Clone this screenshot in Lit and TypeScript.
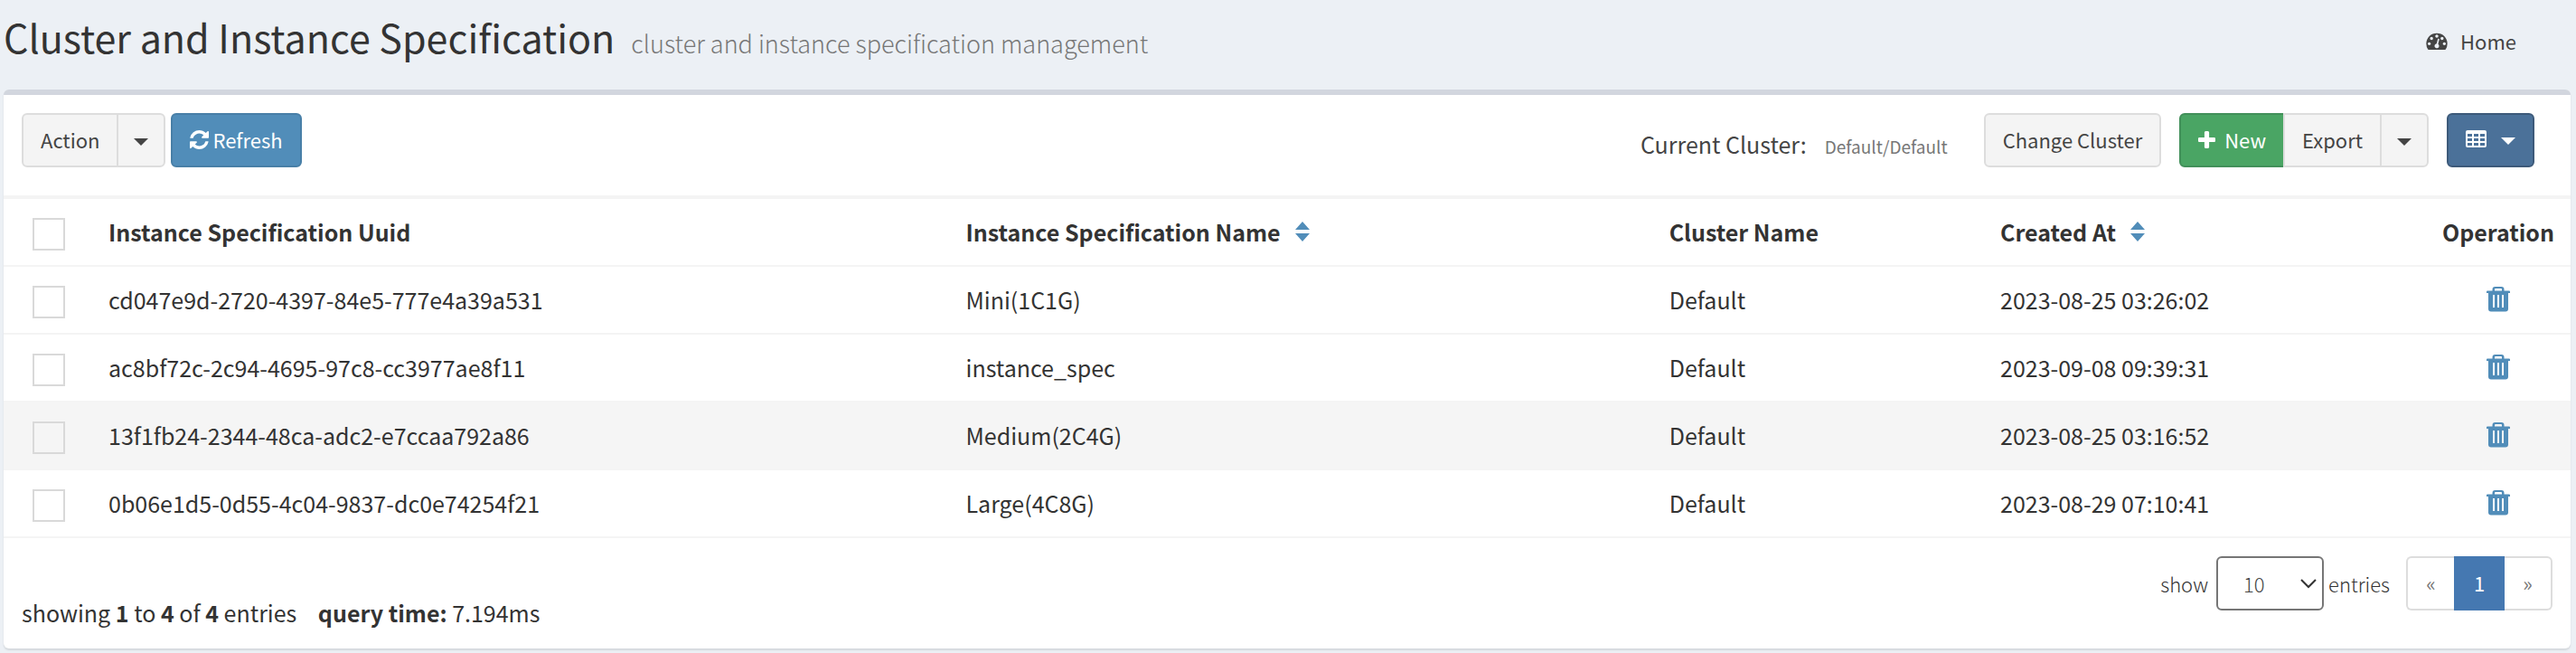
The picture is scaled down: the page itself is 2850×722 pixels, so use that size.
import { LitElement, html, css } from "lit";
import { customElement, state } from "lit/decorators.js";
import { classMap } from "lit/directives/class-map.js";

interface Spec {
  uuid: string;
  name: string;
  cluster: string;
  created: string;
}

const SPECS: Spec[] = [
  { uuid: "cd047e9d-2720-4397-84e5-777e4a39a531", name: "Mini(1C1G)", cluster: "Default", created: "2023-08-25 03:26:02" },
  { uuid: "ac8bf72c-2c94-4695-97c8-cc3977ae8f11", name: "instance_spec", cluster: "Default", created: "2023-09-08 09:39:31" },
  { uuid: "13f1fb24-2344-48ca-adc2-e7ccaa792a86", name: "Medium(2C4G)", cluster: "Default", created: "2023-08-25 03:16:52" },
  { uuid: "0b06e1d5-0d55-4c04-9837-dc0e74254f21", name: "Large(4C8G)", cluster: "Default", created: "2023-08-29 07:10:41" },
];

const dashboardIcon = html`<svg class="ico ico-home" viewBox="0 128 1792 1536" aria-hidden="true"><path d="M384 1152q0-53-37.5-90.5t-90.5-37.5-90.5 37.5-37.5 90.5 37.5 90.5 90.5 37.5 90.5-37.5 37.5-90.5zm192-448q0-53-37.5-90.5t-90.5-37.5-90.5 37.5-37.5 90.5 37.5 90.5 90.5 37.5 90.5-37.5 37.5-90.5zm428 481l101-382q6-26-7.5-48.5t-38.5-29.5-48 6.5-30 39.5l-101 382q-60 5-107 43.5t-63 98.5q-20 77 20 146t117 89 146-20 89-117q16-60-6-117t-72-91zm660-33q0-53-37.5-90.5t-90.5-37.5-90.5 37.5-37.5 90.5 37.5 90.5 90.5 37.5 90.5-37.5 37.5-90.5zm-640-640q0-53-37.5-90.5t-90.5-37.5-90.5 37.5-37.5 90.5 37.5 90.5 90.5 37.5 90.5-37.5 37.5-90.5zm448 192q0-53-37.5-90.5t-90.5-37.5-90.5 37.5-37.5 90.5 37.5 90.5 90.5 37.5 90.5-37.5 37.5-90.5zm320 448q0 261-141 483-19 29-54 29h-1402q-35 0-54-29-141-221-141-483 0-182 71-348t191-286 286-191 348-71 348 71 286 191 191 286 71 348z"/></svg>`;

const refreshIcon = html`<svg class="ico ico-refresh" viewBox="128 128 1536 1536" aria-hidden="true"><path d="M1639 1056q0 5-1 7-64 268-268 434.5t-478 166.5q-146 0-282.5-55t-243.5-157l-129 129q-19 19-45 19t-45-19-19-45v-448q0-26 19-45t45-19h448q26 0 45 19t19 45-19 45l-137 137q71 66 161 102t187 36q134 0 250-65t186-179q11-17 53-117 8-23 30-23h192q13 0 22.5 9.5t9.5 22.5zm25-800v448q0 26-19 45t-45 19h-448q-26 0-45-19t-19-45 19-45l138-138q-148-137-349-137-134 0-250 65t-186 179q-11 17-53 117-8 23-30 23h-199q-13 0-22.5-9.5t-9.5-22.5v-7q65-268 270-434.5t480-166.5q146 0 284 55.5t245 156.5l130-129q19-19 45-19t45 19 19 45z"/></svg>`;

const plusIcon = html`<svg class="ico ico-plus" viewBox="192 128 1408 1408" aria-hidden="true"><path d="M1600 736v192q0 40-28 68t-68 28h-416v416q0 40-28 68t-68 28h-192q-40 0-68-28t-28-68v-416h-416q-40 0-68-28t-28-68v-192q0-40 28-68t68-28h416v-416q0-40 28-68t68-28h192q40 0 68 28t28 68v416h416q40 0 68 28t28 68z"/></svg>`;

const gridCells = [4, 9, 14].map((y) => [2, 9, 16].map((x) => `M${x} ${y}h5v3h-5z`).join("")).join("");

const gridIcon = html`<svg class="ico ico-grid" viewBox="0 0 23 20" aria-hidden="true">
  <path fill-rule="evenodd" d="M2 0h19a2 2 0 0 1 2 2v15a2 2 0 0 1-2 2H2a2 2 0 0 1-2-2V2a2 2 0 0 1 2-2z${gridCells}"/></svg>`;

const trashIcon = html`<svg class="ico ico-trash" viewBox="0 0 26 28" aria-hidden="true">
  <path fill-rule="evenodd" d="M9.500 0h7a3 3 0 0 1 3 3v1.500H25a1 1 0 0 1 1 1V7h-2v17.500a3 3 0 0 1-3 3H5a3 3 0 0 1-3-3V7H0V5.500a1 1 0 0 1 1-1h5.500V3a3 3 0 0 1 3-3zM10 2a1 1 0 0 0-1 1v1.500h8V3a1 1 0 0 0-1-1zM7 9v14h2V9zM12 9v14h2V9zM17 9v14h2V9z"/></svg>`;

const caret = html`<svg class="ico ico-caret" viewBox="0 0 16 8" aria-hidden="true"><path d="M0 0h16L8 8z"/></svg>`;

const sortIcon = html`<svg class="ico ico-sort" viewBox="0 0 16 22" aria-hidden="true"><path d="M8 0l8 9H0zM0 13h16l-8 9z"/></svg>`;

@customElement("app-root")
export class AppRoot extends LitElement {
  @state() private selected = new Set<string>();
  @state() private active = SPECS[2].uuid;

  static styles = css`
    :host {
      display: block;
      min-height: 100vh;
      box-sizing: border-box;
      padding: 0 6px 4px 4px;
      background: #ecf0f5;
      color: #333;
      font-family: "Noto Sans CJK SC", "Noto Sans", sans-serif;
      font-size: 25px;
      line-height: 40px;
    }
    *, *::before, *::after { box-sizing: border-box; }
    .ico { display: block; flex: none; fill: currentColor; }
    .ico-home { width: 24px; height: 20px; }
    .ico-refresh { width: 21px; height: 21px; }
    .ico-plus { width: 19px; height: 19px; }
    .ico-grid { width: 23px; height: 20px; }
    .ico-trash { width: 26px; height: 28px; }
    .ico-caret { width: 16px; height: 8px; margin-top: 4px; }
    .ico-sort { width: 16px; height: 22px; color: #518db9; }

    .page-head {
      display: flex;
      align-items: center;
      justify-content: space-between;
      height: 99px;
      padding: 0 60px 10px 0;
    }
    h1 {
      display: flex;
      align-items: baseline;
      gap: 18px;
      margin: 0;
      padding-bottom: 2px;
      font-size: 43px;
      font-weight: 400;
      line-height: 60px;
    }
    .subtitle { font-size: 27px; font-weight: 300; color: #777; }
    .home {
      display: flex;
      align-items: center;
      gap: 14px;
      color: #444;
      font-size: 22px;
      text-decoration: none;
    }

    .box {
      background: #fff;
      border-top: 6px solid #d2d6de;
      border-radius: 6px;
      box-shadow: 0 2px 2px rgba(0, 0, 0, 0.1);
    }
    .toolbar {
      display: flex;
      justify-content: space-between;
      padding: 20px 40px 31px 20px;
    }
    .left { display: flex; gap: 6px; }
    .right { display: flex; gap: 20px; }
    .current {
      display: flex;
      align-items: baseline;
      gap: 20px;
      margin: 0 20px 0 0;
      padding-top: 14px;
      color: #444;
    }
    .current small { font-size: 19px; color: #777; }

    button, select { font: inherit; cursor: pointer; }
    .btn {
      display: flex;
      align-items: center;
      justify-content: center;
      height: 60px;
      padding: 0 19px 2px;
      border: 2px solid #ddd;
      border-radius: 6px;
      background: #f4f4f4;
      color: #444;
      font-size: 22px;
      line-height: 36px;
    }
    .group { display: flex; }
    .group .btn + .btn { margin-left: -2px; border-radius: 0; }
    .group .btn:first-child { border-radius: 6px 0 0 6px; }
    .group .btn:last-child { border-radius: 0 6px 6px 0; }
    .blue { gap: 4px; background: #518db9; border-color: #487fa7; color: #fff; }
    .green { gap: 10px; background: #4aa564; border-color: #42905a; color: #fff; }
    .navy { gap: 16px; background: #4b7199; border-color: #3d5a7a; color: #fff; }
    .group .toggle { padding: 0 17px; }

    table {
      width: 100%;
      table-layout: fixed;
      border-collapse: separate;
      border-spacing: 0;
      border-top: 4px solid #f4f4f4;
    }
    .c-check { width: 100px; }
    .c-uuid { width: 33.4%; }
    .c-name { width: 27.4%; }
    .c-cluster { width: 12.9%; }
    .c-op { width: 160px; }
    th, td {
      height: 75px;
      padding: 0 16px 2px;
      border-bottom: 2px solid #f4f4f4;
      text-align: left;
      vertical-align: middle;
      white-space: nowrap;
    }
    th { font-weight: 700; }
    .active { background: #f5f5f5; }
    .check { padding: 5px 0 0 32px; }
    .check input {
      appearance: none;
      display: block;
      width: 36px;
      height: 36px;
      margin: 0;
      border: 2px solid #d9d9d9;
      background: transparent;
    }
    .check input:checked { background: #518db9; }
    .sortable {
      display: flex;
      align-items: center;
      gap: 16px;
      padding: 0;
      border: 0;
      background: none;
      color: inherit;
    }
    .op { text-align: center; }
    .trash {
      display: flex;
      justify-content: center;
      width: 100%;
      padding: 0;
      border: 0;
      background: none;
      color: #518db9;
    }

    .foot {
      display: flex;
      justify-content: space-between;
      align-items: flex-start;
      padding: 20px;
    }
    .summary { margin: 0; padding-top: 42px; }
    .summary .time { margin-left: 18px; }
    .pager { display: flex; align-items: center; gap: 18px; }
    .size {
      display: flex;
      align-items: center;
      gap: 5px;
      font-size: 22px;
      font-weight: 300;
    }
    .size .lead { margin-right: 4px; }
    .select { display: grid; align-items: center; }
    .select > * { grid-area: 1 / 1; }
    select {
      appearance: none;
      width: 119px;
      height: 60px;
      padding: 0 28px;
      border: 2px solid #767676;
      border-radius: 6px;
      background: #fff;
      color: #444;
    }
    .chev {
      justify-self: end;
      margin-right: 8px;
      width: 18px;
      height: 11px;
      fill: none;
      stroke: #333;
      stroke-width: 2;
      pointer-events: none;
    }
    .pages {
      display: flex;
      margin: 0;
      padding: 0;
      list-style: none;
      font-size: 22px;
    }
    .pages a {
      display: flex;
      align-items: center;
      justify-content: center;
      width: 53px;
      height: 60px;
      padding-bottom: 2px;
      border: 2px solid #ddd;
      color: #777;
      text-decoration: none;
    }
    .pages .prev { border-right: 0; border-radius: 6px 0 0 6px; }
    .pages .next { border-left: 0; border-radius: 0 6px 6px 0; }
    .pages .current-page { width: 56px; background: #4578b1; border-color: #4578b1; color: #fff; }
  `;

  private toggle(id: string) {
    const next = new Set(this.selected);
    if (!next.delete(id)) next.add(id);
    this.selected = next;
  }

  private toggleAll() {
    this.selected = this.selected.size === SPECS.length ? new Set() : new Set(SPECS.map((s) => s.uuid));
  }

  private row(spec: Spec) {
    return html`<tr class=${classMap({ active: spec.uuid === this.active })} @mouseenter=${() => (this.active = spec.uuid)}>
      <td class="check"><input type="checkbox" aria-label=${spec.uuid} .checked=${this.selected.has(spec.uuid)} @change=${() => this.toggle(spec.uuid)} /></td>
      <td>${spec.uuid}</td>
      <td>${spec.name}</td>
      <td>${spec.cluster}</td>
      <td>${spec.created}</td>
      <td class="op"><button class="trash" aria-label="Delete">${trashIcon}</button></td>
    </tr>`;
  }

  render() {
    return html`
      <header class="page-head">
        <h1>Cluster and Instance Specification <small class="subtitle">cluster and instance specification management</small></h1>
        <a class="home" href="#">${dashboardIcon}<span>Home</span></a>
      </header>
      <main class="box">
        <div class="toolbar">
          <div class="left">
            <div class="group">
              <button class="btn">Action</button>
              <button class="btn toggle" aria-label="Action menu">${caret}</button>
            </div>
            <button class="btn blue">${refreshIcon}<span>Refresh</span></button>
          </div>
          <div class="right">
            <p class="current">Current Cluster: <small>Default/Default</small></p>
            <button class="btn">Change Cluster</button>
            <div class="group">
              <button class="btn green">${plusIcon}<span>New</span></button>
              <button class="btn">Export</button>
              <button class="btn toggle" aria-label="Export menu">${caret}</button>
            </div>
            <button class="btn navy" aria-label="Columns">${gridIcon}${caret}</button>
          </div>
        </div>
        <table>
          <colgroup>
            <col class="c-check" /><col class="c-uuid" /><col class="c-name" /><col class="c-cluster" /><col /><col class="c-op" />
          </colgroup>
          <thead>
            <tr>
              <th class="check"><input type="checkbox" aria-label="Select all" .checked=${this.selected.size === SPECS.length} @change=${this.toggleAll} /></th>
              <th>Instance Specification Uuid</th>
              <th><button class="sortable">Instance Specification Name ${sortIcon}</button></th>
              <th>Cluster Name</th>
              <th><button class="sortable">Created At ${sortIcon}</button></th>
              <th class="op">Operation</th>
            </tr>
          </thead>
          <tbody>${SPECS.map((s) => this.row(s))}</tbody>
        </table>
        <footer class="foot">
          <p class="summary">showing <b>1</b> to <b>4</b> of <b>4</b> entries <span class="time"><b>query time:</b> 7.194ms</span></p>
          <div class="pager">
            <div class="size">
              <label class="lead" for="size">show</label>
              <div class="select">
                <select id="size"><option>10</option><option>20</option><option>50</option></select>
                <svg class="chev" viewBox="0 0 18 11" aria-hidden="true"><path d="M1 1l8 8 8-8"/></svg>
              </div>
              <span>entries</span>
            </div>
            <ul class="pages">
              <li><a class="prev" href="#" aria-label="Previous">«</a></li>
              <li><a class="current-page" href="#" aria-current="page">1</a></li>
              <li><a class="next" href="#" aria-label="Next">»</a></li>
            </ul>
          </div>
        </footer>
      </main>
    `;
  }
}
